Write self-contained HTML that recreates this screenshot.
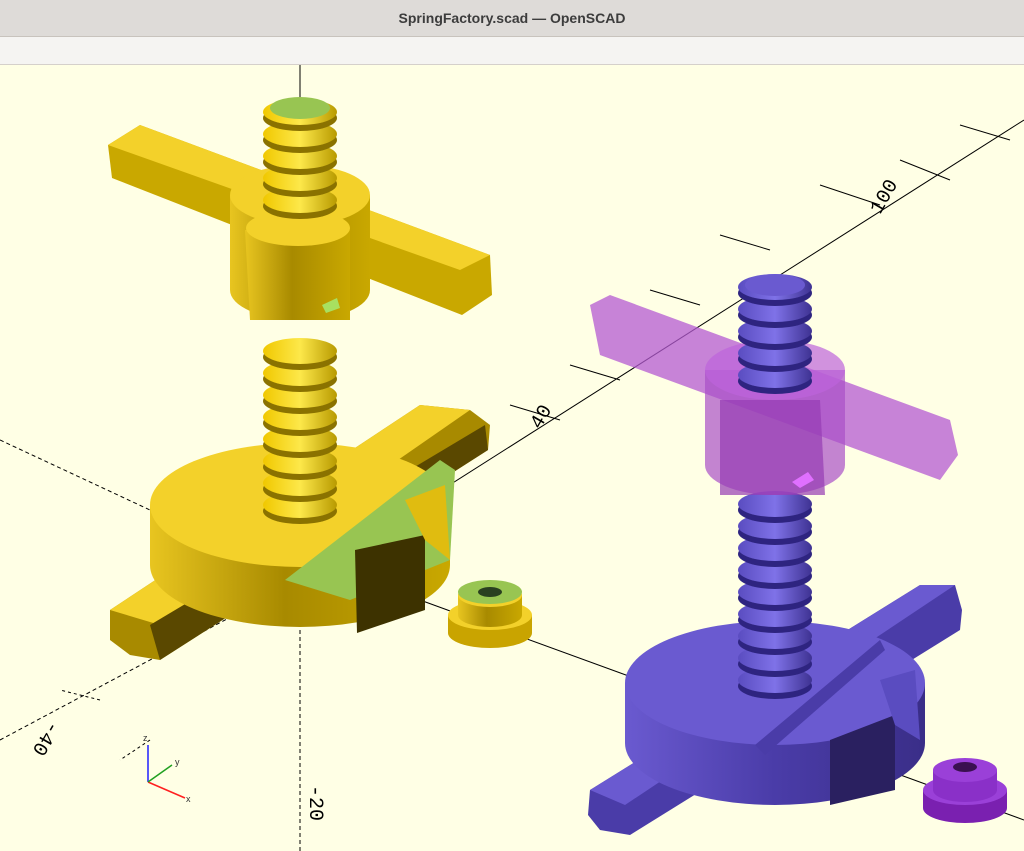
<!DOCTYPE html>
<html><head><meta charset="utf-8"><style>
html,body{margin:0;padding:0;width:1024px;height:851px;overflow:hidden;background:#ffffe5;font-family:"Liberation Sans",sans-serif}
#title{position:absolute;left:0;top:0;width:1024px;height:36px;background:#dedbd8;border-bottom:1px solid #c8c3bd;text-align:center;line-height:36px;font-size:14px;font-weight:bold;color:#3c3c3c}
#menu{position:absolute;left:0;top:37px;width:1024px;height:27px;background:#f5f4f2;border-bottom:1px solid #d5d0cb}
svg{position:absolute;left:0;top:0}
</style></head><body>
<div id="title">SpringFactory.scad — OpenSCAD</div>
<div id="menu"></div>
<svg id="s" width="1024" height="851" viewBox="0 0 1024 851">
<defs>
<linearGradient id="ycyl" x1="0" x2="1"><stop offset="0" stop-color="#e8c520"/><stop offset=".45" stop-color="#a88a00"/><stop offset="1" stop-color="#c9a800"/></linearGradient>
<linearGradient id="pcyl" x1="0" x2="1"><stop offset="0" stop-color="#6a5ad0"/><stop offset=".5" stop-color="#4a3ca8"/><stop offset="1" stop-color="#3a2e88"/></linearGradient>
<linearGradient id="ycoil" x1="0" x2="1"><stop offset="0" stop-color="#f0c800"/><stop offset=".5" stop-color="#fde84a"/><stop offset="1" stop-color="#b89a00"/></linearGradient>
<linearGradient id="pcoil" x1="0" x2="1"><stop offset="0" stop-color="#5a4cc0"/><stop offset=".5" stop-color="#7f72e8"/><stop offset="1" stop-color="#3e3292"/></linearGradient>
</defs>
<g stroke="#000" stroke-width="1" fill="none">
<line x1="300" y1="65" x2="300" y2="110"/>
<line x1="300" y1="630" x2="300" y2="851" stroke-dasharray="4,3"/>
<line x1="420" y1="600" x2="1024" y2="820"/>
<line x1="0" y1="440" x2="300" y2="580" stroke-dasharray="4,3"/>
<line x1="300" y1="580" x2="1024" y2="120"/>
<line x1="0" y1="740" x2="300" y2="580" stroke-dasharray="4,3"/>
<line x1="820" y1="185" x2="880" y2="205"/><line x1="900" y1="160" x2="950" y2="180"/><line x1="960" y1="125" x2="1010" y2="140"/>
<line x1="720" y1="235" x2="770" y2="250"/><line x1="650" y1="290" x2="700" y2="305"/><line x1="570" y1="365" x2="620" y2="380"/>
<line x1="510" y1="405" x2="560" y2="420"/>
<line x1="150" y1="740" x2="120" y2="760" stroke-dasharray="3,3"/>
<line x1="100" y1="700" x2="60" y2="690" stroke-dasharray="3,3"/>
</g>
<g font-size="20" fill="#000" font-family="Liberation Mono">
<text x="880" y="215" transform="rotate(-60 880 215)">100</text>
<text x="540" y="430" transform="rotate(-60 540 430)">40</text>
<text x="310" y="785" transform="rotate(90 310 785)">-20</text>
<text x="50" y="720" transform="rotate(120 50 720)">-40</text>
</g>
<g stroke-width="1.5" fill="none">
<line x1="148" y1="782" x2="148" y2="745" stroke="#2020ff"/>
<line x1="148" y1="782" x2="185" y2="798" stroke="#ff2020"/>
<line x1="148" y1="782" x2="172" y2="765" stroke="#20a020"/>
</g>
<g font-size="9" fill="#333"><text x="143" y="741">z</text><text x="175" y="765">y</text><text x="186" y="802">x</text></g>
<g id="objs"></g>
</svg>
<script>
var g=document.getElementById('objs'),h='';
function P(pts,f){h+='<polygon points="'+pts+'" fill="'+f+'"/>';}
function E(cx,cy,rx,ry,f){h+='<ellipse cx="'+cx+'" cy="'+cy+'" rx="'+rx+'" ry="'+ry+'" fill="'+f+'"/>';}
function cyl(cx,cy,rx,ry,hh,side,top){h+='<path d="M'+(cx-rx)+' '+cy+' L'+(cx-rx)+' '+(cy+hh)+' A'+rx+' '+ry+' 0 0 0 '+(cx+rx)+' '+(cy+hh)+' L'+(cx+rx)+' '+cy+' Z" fill="'+side+'"/>';E(cx,cy,rx,ry,top);}
function coils(cx,y0,y1,f,dark){for(var y=y1;y>=y0;y-=22){E(cx,y+6,37,13,dark);E(cx,y,37,13,f);}}
// YELLOW
// bottom arm
P("110,610 420,405 470,410 490,425 488,450 160,660 130,655 110,640","#a88a00");
P("110,610 420,405 470,410 160,625","#f3d12a");
P("150,625 160,660 488,450 485,425","#5a4800");
cyl(300,505,150,62,60,"url(#ycyl)","#f3d12a");
P("285,580 440,460 455,470 450,560 350,600","#98c552");
P("355,550 425,535 425,610 357,633","#3d3200");
P("405,500 445,485 450,560 425,540","#e0bc10");
coils(300,330,505,"url(#ycoil)","#8a7200");
// top arm
P("108,145 140,125 490,255 492,295 462,315 112,178","#c9a800");
P("108,145 140,125 490,255 460,270","#f3d12a");
cyl(300,195,70,30,95,"url(#ycyl)","#f3d12a");
P("245,230 350,230 350,320 250,320","url(#ycyl)");
E(298,228,52,18,"#f3d12a");
P("322,305 337,298 340,308 326,313","#a8e060");
coils(300,110,200,"url(#ycoil)","#8a7200");
E(300,108,30,11,"#98c552");
// small yellow ring
cyl(490,615,42,15,18,"#c9a400","#f3d12a");
cyl(490,595,32,12,20,"url(#ycyl)","#f3d12a");
E(490,592,32,12,"#98c552");E(490,592,12,5,"#2a4020");
// PURPLE
P("590,790 920,585 955,585 962,610 960,630 630,835 600,830 588,815","#4a3ca8");
P("590,790 920,585 955,585 625,805","#6a5ad0");
cyl(775,683,150,62,60,"url(#pcyl)","#6a5ad0");
P("755,745 880,640 885,650 765,755","#4a3ca8");
P("830,740 895,715 895,790 830,805","#2a2060");
P("880,680 915,670 920,740 895,725","#5a4cc0");
coils(775,500,680,"url(#pcoil)","#2e2480");
// transparent top
P("590,305 610,295 950,420 958,455 940,480 600,355","rgba(180,90,210,.75)");
cyl(775,370,70,30,95,"rgba(170,80,200,.7)","rgba(190,100,220,.7)");
P("720,400 820,400 825,495 720,495","rgba(150,60,180,.7)");
P("792,482 808,472 814,480 800,488","#e070ff");
coils(775,285,375,"url(#pcoil)","#2e2480");
E(775,285,30,11,"#6a5ad0");
cyl(965,790,42,15,18,"#7a20b0","#9a40d8");
cyl(965,770,32,12,20,"#8a30c8","#9a40d8");
E(965,767,12,5,"#3a1050");
g.innerHTML=h;
</script>
</body></html>
